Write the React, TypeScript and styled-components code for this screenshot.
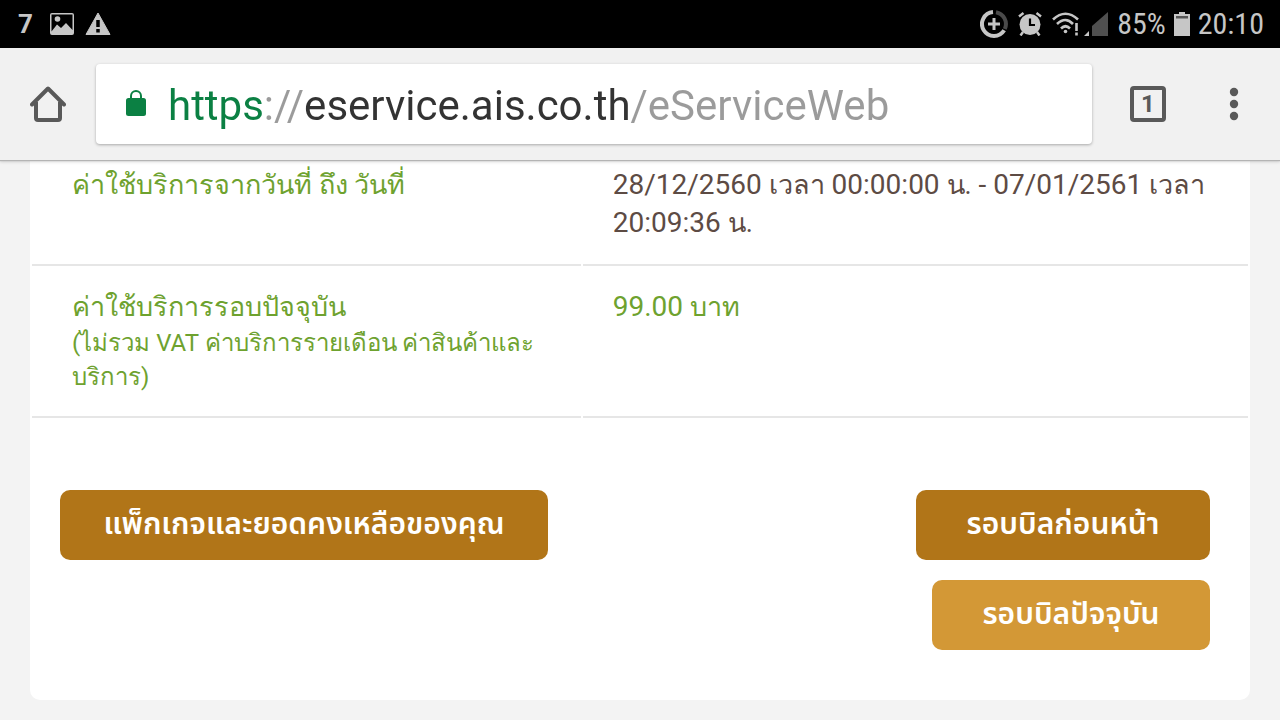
import React from "react";
import styled, { createGlobalStyle } from "styled-components";

const GlobalStyle = createGlobalStyle`
  * { box-sizing: border-box; }
  body { margin: 0; background: #f3f3f3; font-family: Roboto, "Noto Sans", sans-serif; }
`;

const StatusBar = styled.header`
  display: flex;
  align-items: center;
  justify-content: space-between;
  height: 48px;
  padding: 0 16px 0 18px;
  background: #000;
  color: #c6c6c6;
`;

const StatusGroup = styled.div<{ $gap: number }>`
  display: flex;
  align-items: center;
  gap: ${(p) => p.$gap}px;
`;

const Notice = styled.span`
  width: 22px;
  font-size: 26px;
  font-weight: 700;
`;

const StatusText = styled.span`
  font-family: "Roboto Condensed", Roboto, sans-serif;
  font-size: 30px;
  line-height: 48px;
`;

const Toolbar = styled.nav`
  position: relative;
  display: flex;
  align-items: center;
  height: 112px;
  padding: 0 16px 0 18px;
  background: #f1f1f1;
  box-shadow: 0 1px 1px #b4b4b4, 0 2px 3px rgba(0, 0, 0, 0.15);
`;

const IconButton = styled.button`
  display: flex;
  align-items: center;
  justify-content: center;
  width: 60px;
  height: 60px;
  padding: 0;
  border: 0;
  background: none;
  color: #595959;
`;

const AddressBar = styled.label`
  display: flex;
  flex: 1;
  align-items: center;
  gap: 20px;
  height: 80px;
  margin: 0 26px 0 18px;
  padding: 0 28px;
  border-radius: 4px;
  background: #fff;
  box-shadow: 0 1px 3px rgba(0, 0, 0, 0.3);
`;

const AddressInput = styled.input`
  flex: 1;
  min-width: 0;
  height: 60px;
  padding: 2px 0 0;
  border: 0;
  outline: 0;
  font: 42px/58px Roboto, sans-serif;
  color: transparent;
  caret-color: #333;
  background: linear-gradient(90deg, #0b8043 96px, #9b9b9b 96px 136px, #333 136px 463px, #9b9b9b 463px);
  background-clip: text;
  -webkit-background-clip: text;
`;

const TabCount = styled.span`
  display: flex;
  align-items: center;
  justify-content: center;
  width: 36px;
  height: 36px;
  border: 4px solid #595959;
  border-radius: 4px;
  font: 700 24px/28px Roboto, sans-serif;
`;

const TabButton = styled(IconButton)`
  margin-right: 26px;
`;

const Card = styled.main`
  margin: 0 30px 20px;
  padding-bottom: 50px;
  border-radius: 0 0 10px 10px;
  background: #fff;
`;

const UsageTable = styled.table`
  width: 100%;
  border-collapse: separate;
  border-spacing: 2px;
  table-layout: fixed;
`;

const cell = `
  padding: 20px 30px 22px;
  border-bottom: 2px solid #e6e6e6;
  font-weight: 400;
  line-height: 38px;
  text-align: left;
  vertical-align: top;
  tr:first-child > & { padding-top: 4px; }
`;

const Label = styled.th`
  ${cell}
  width: 45.2%;
  padding-left: 40px;
  font-size: 27px;
  color: #6ea22f;
`;

const Value = styled.td<{ $accent?: boolean }>`
  ${cell}
  font-size: 28px;
  color: ${(p) => (p.$accent ? "#6ea22f" : "#5d4b44")};
`;

const Thai = styled.span`
  font-size: 27px;
  line-height: 30px;
`;

const Note = styled.small`
  display: block;
  font-size: 24px;
  line-height: 34px;
`;

const Actions = styled.div`
  display: flex;
  align-items: flex-start;
  justify-content: space-between;
  margin-top: 70px;
  padding: 0 40px 0 30px;
`;

const ActionStack = styled.div`
  display: flex;
  flex-direction: column;
  align-items: flex-end;
  gap: 20px;
`;

const ActionButton = styled.button<{ $light?: boolean; $width: number }>`
  width: ${(p) => p.$width}px;
  height: 70px;
  padding: 0;
  border: 0;
  border-radius: 10px;
  background: ${(p) => (p.$light ? "#d39836" : "#b17518")};
  color: #fff;
  font: 600 30px/40px "Noto Sans Thai", "Noto Sans", sans-serif;
  white-space: nowrap;
`;

const PictureIcon = () => (
  <svg width="24" height="24" viewBox="0 0 24 24" fill="currentColor" aria-hidden="true">
    <path fillRule="evenodd" d="M2 1h20a2 2 0 0 1 2 2v18a2 2 0 0 1-2 2H2a2 2 0 0 1-2-2V3a2 2 0 0 1 2-2zm-.5 1.500v17l5.500-7 4 3.500 5-5 6.500 7V2.500z" />
    <circle cx="7.500" cy="7" r="2.800" />
  </svg>
);

const WarningIcon = () => (
  <svg width="28" height="24" viewBox="0 0 28 24" aria-hidden="true">
    <path d="M14 1 2 22.500h24z" fill="currentColor" stroke="currentColor" strokeWidth="1" strokeLinejoin="round" />
    <path d="M14 8v7M14 17v3.500" stroke="#000" strokeWidth="3.500" />
  </svg>
);

const DataIcon = () => (
  <svg width="28" height="28" viewBox="0 0 28 28" fill="none" strokeWidth="4" aria-hidden="true">
    <path d="M16 2.200A12 12 0 0 1 24.800 19" stroke="#4a4a4a" />
    <path d="M13 2A12 12 0 1 0 24.200 20.300" stroke="currentColor" />
    <path d="M14 8v12M8 14h12" stroke="currentColor" strokeWidth="3" />
  </svg>
);

const AlarmIcon = () => (
  <svg width="24" height="24" viewBox="0 0 24 24" fill="none" aria-hidden="true">
    <circle cx="12" cy="12.500" r="10.500" fill="currentColor" />
    <path d="M1 4.500 5.500 1M23 4.500 18.500 1M5 20l-2.500 3.500M19 20l2.500 3.500" stroke="currentColor" strokeWidth="2.500" />
    <path d="M12 6.500V13h5" stroke="#000" strokeWidth="2.200" />
  </svg>
);

const WifiIcon = () => (
  <svg width="28" height="24" viewBox="0 0 28 24" fill="none" stroke="currentColor" strokeWidth="2.600" aria-hidden="true">
    <path d="M1 7.500Q13.500-4 26 7.500M5 12q8.500-8 16 0M9 16.500q4.500-4.500 9 0" />
    <circle cx="13.500" cy="19.500" r="1.800" fill="currentColor" stroke="none" />
    <path d="M24.500 11v8M24.500 20.500v3" />
  </svg>
);

const SignalIcon = () => (
  <svg width="25" height="24" viewBox="0 0 25 24" aria-hidden="true">
    <path d="M5 19v5H0z" fill="currentColor" />
    <path d="M24 0v24H8V14z" fill="#505050" />
  </svg>
);

const BatteryIcon = () => (
  <svg width="16" height="24" viewBox="0 0 16 24" aria-hidden="true">
    <path d="M5 0h6v2h5v22H0V2h5z" fill="currentColor" />
    <path d="M2 4h12v2.500H2z" fill="#555" />
  </svg>
);

const HomeIcon = () => (
  <svg width="36" height="36" viewBox="0 0 36 36" fill="none" stroke="currentColor" strokeWidth="4" aria-hidden="true">
    <path d="M2 18.500 18 2.500l16 16" strokeLinecap="round" strokeLinejoin="round" />
    <path d="M6 16v16a2 2 0 0 0 2 2h20a2 2 0 0 0 2-2V16" />
  </svg>
);

const LockIcon = () => (
  <svg width="24" height="28" viewBox="0 0 24 28" aria-hidden="true">
    <rect x="2" y="8" width="20" height="18" rx="2.500" fill="#0b8043" />
    <path d="M7 9V6a5 5 0 0 1 10 0v3" fill="none" stroke="#0b8043" strokeWidth="2" />
  </svg>
);

const MenuIcon = () => (
  <svg width="8" height="32" viewBox="0 0 8 32" fill="currentColor" overflow="visible" aria-hidden="true">
    <circle cx="4" cy="4" r="4.200" />
    <circle cx="4" cy="16" r="4.200" />
    <circle cx="4" cy="28" r="4.200" />
  </svg>
);

export default function App() {
  return (
    <>
      <GlobalStyle />
      <StatusBar>
        <StatusGroup $gap={10}>
          <Notice>7</Notice>
          <PictureIcon />
          <WarningIcon />
        </StatusGroup>
        <StatusGroup $gap={8}>
          <StatusGroup $gap={10}>
            <DataIcon />
            <AlarmIcon />
            <StatusGroup $gap={4}>
              <WifiIcon />
              <SignalIcon />
            </StatusGroup>
          </StatusGroup>
          <StatusText>85%</StatusText>
          <BatteryIcon />
          <StatusText>20:10</StatusText>
        </StatusGroup>
      </StatusBar>
      <Toolbar>
        <IconButton type="button" aria-label="Home"><HomeIcon /></IconButton>
        <AddressBar>
          <LockIcon />
          <AddressInput type="text" aria-label="Address" defaultValue="https://eservice.ais.co.th/eServiceWeb" spellCheck={false} />
        </AddressBar>
        <TabButton type="button" aria-label="Open tabs"><TabCount>1</TabCount></TabButton>
        <IconButton type="button" aria-label="Menu"><MenuIcon /></IconButton>
      </Toolbar>
      <Card>
        <UsageTable>
          <tbody>
            <tr>
              <Label scope="row">ค่าใช้บริการจากวันที่ ถึง วันที่</Label>
              <Value>
                28/12/2560 <Thai>เวลา</Thai> 00:00:00 <Thai>น.</Thai> - 07/01/2561 <Thai>เวลา</Thai> 20:09:36 <Thai>น.</Thai>
              </Value>
            </tr>
            <tr>
              <Label scope="row">
                ค่าใช้บริการรอบปัจจุบัน
                <Note>(ไม่รวม VAT ค่าบริการรายเดือน ค่าสินค้าและบริการ)</Note>
              </Label>
              <Value $accent>99.00 <Thai>บาท</Thai></Value>
            </tr>
          </tbody>
        </UsageTable>
        <Actions>
          <ActionButton type="button" $width={488}>แพ็กเกจและยอดคงเหลือของคุณ</ActionButton>
          <ActionStack>
            <ActionButton type="button" $width={294}>รอบบิลก่อนหน้า</ActionButton>
            <ActionButton type="button" $light $width={278}>รอบบิลปัจจุบัน</ActionButton>
          </ActionStack>
        </Actions>
      </Card>
    </>
  );
}
